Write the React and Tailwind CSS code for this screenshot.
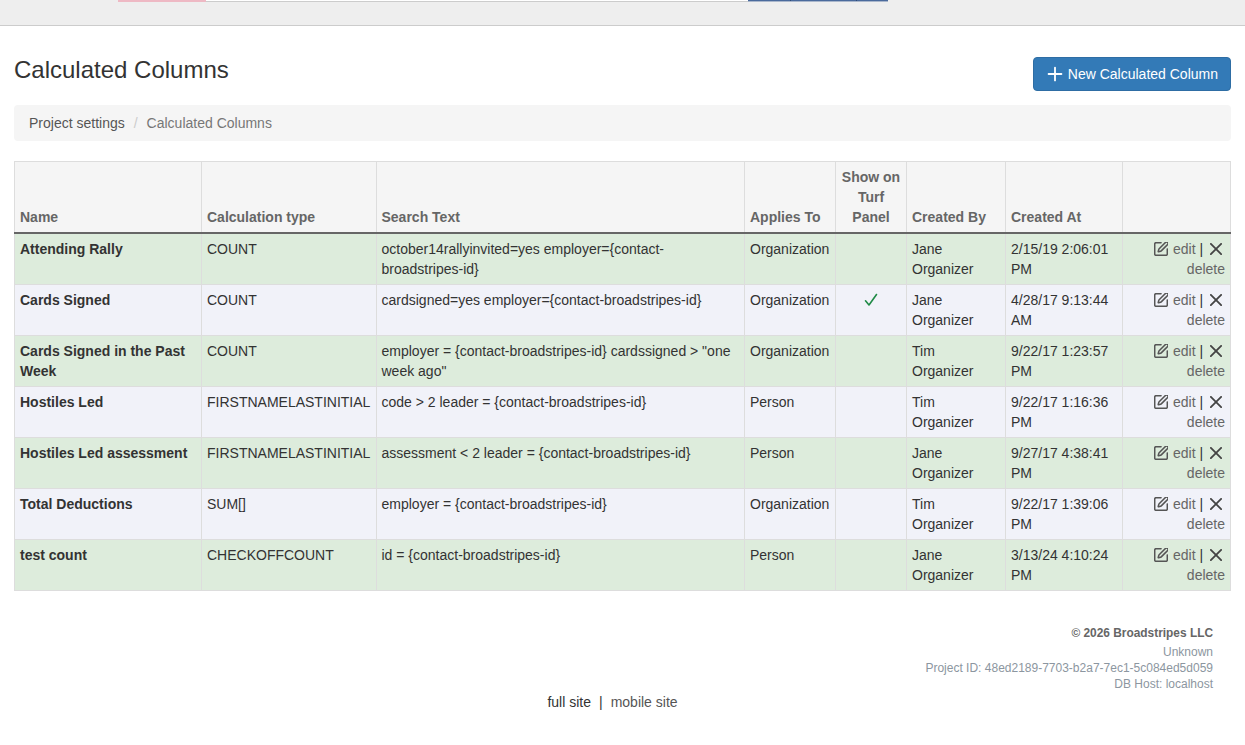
import React from "react";
import { Plus } from "lucide-react";

const rows = [
  ["Attending Rally", "COUNT", "october14rallyinvited=yes employer={contact-broadstripes-id}", "Organization", false, "Jane Organizer", "2/15/19 2:06:01 PM"],
  ["Cards Signed", "COUNT", "cardsigned=yes employer={contact-broadstripes-id}", "Organization", true, "Jane Organizer", "4/28/17 9:13:44 AM"],
  ["Cards Signed in the Past Week", "COUNT", 'employer = {contact-broadstripes-id} cardssigned > "one week ago"', "Organization", false, "Tim Organizer", "9/22/17 1:23:57 PM"],
  ["Hostiles Led", "FIRSTNAMELASTINITIAL", "code > 2 leader = {contact-broadstripes-id}", "Person", false, "Tim Organizer", "9/22/17 1:16:36 PM"],
  ["Hostiles Led assessment", "FIRSTNAMELASTINITIAL", "assessment < 2 leader = {contact-broadstripes-id}", "Person", false, "Jane Organizer", "9/27/17 4:38:41 PM"],
  ["Total Deductions", "SUM[]", "employer = {contact-broadstripes-id}", "Organization", false, "Tim Organizer", "9/22/17 1:39:06 PM"],
  ["test count", "CHECKOFFCOUNT", "id = {contact-broadstripes-id}", "Person", false, "Jane Organizer", "3/13/24 4:10:24 PM"],
];

const headers = ["Name", "Calculation type", "Search Text", "Applies To", "Show on Turf Panel", "Created By", "Created At", ""];
const widths = ["w-[187px]", "w-[175px]", "w-[368px]", "w-[91px]", "w-[71px]", "w-[99px]", "w-[117px]", "w-[108px]"];

function PenIcon() {
  return (
    <svg viewBox="2 2 20 20" width="14" height="14" className="inline-block mr-[5px] align-[-2px] text-[#555]" fill="none" stroke="currentColor" strokeWidth="2.2" strokeLinecap="round" strokeLinejoin="round">
      <path d="M12 3H5a2 2 0 0 0-2 2v14a2 2 0 0 0 2 2h14a2 2 0 0 0 2-2v-7" />
      <path d="M18.375 2.625a1 1 0 0 1 3 3l-9.013 9.014a2 2 0 0 1-.853.505l-2.873.84a.5.5 0 0 1-.62-.62l.84-2.873a2 2 0 0 1 .506-.852z" />
    </svg>
  );
}

function CrossIcon() {
  return (
    <svg viewBox="5 5 14 14" width="12" height="12" className="inline-block mx-[3px] align-[-1px] text-[#444]" fill="none" stroke="currentColor" strokeWidth="2.1" strokeLinecap="round">
      <path d="M18 6 6 18" />
      <path d="m6 6 12 12" />
    </svg>
  );
}

export default function App() {
  return (
    <div className="min-h-[745px] bg-white text-[14px] leading-[20px] text-[#333]" style={{ fontFamily: '"Liberation Sans", Arial, sans-serif' }}>
      <header className="h-[26px] border-b border-[#ccc] bg-[#eee] flex items-start pl-[118px]">
        <div className="h-[2px] w-[88px] bg-[#eeb9c4]" />
        <div className="h-[2px] w-[542px] bg-white border-b border-[#ccc]" />
        <div className="flex h-[2px] w-[140px] bg-[#4a6a9c] border-b border-[#a9b6cb]">
          <div className="w-[43px] border-r border-[#2f4a75]" />
          <div className="w-[66px] border-r border-[#2f4a75]" />
        </div>
      </header>

      <main className="px-[14px]">
        <div className="flex items-start justify-between pt-[31px]">
          <h1 className="text-[24px] leading-[26px] font-normal mt-0">Calculated Columns</h1>
          <button className="h-[34px] w-[198px] flex items-center justify-end gap-[2px] pr-[12px] rounded-[4px] border border-[#2e6da4] bg-[#337ab7] text-white text-[14px]">
            <Plus size={22} strokeWidth={2} />
            New Calculated Column
          </button>
        </div>

        <nav className="mt-[14px] h-[36px] flex items-center rounded-[4px] bg-[#f5f5f5] px-[15px]">
          <span className="text-[#555]">Project settings</span>
          <span className="text-[#ccc] px-[9px]">/</span>
          <span className="text-[#777]">Calculated Columns</span>
        </nav>

        <table className="mt-[20px] w-[1216px] table-fixed border-collapse border border-[#ddd]">
          <colgroup>
            {widths.map((w, i) => <col key={i} className={w} />)}
          </colgroup>
          <thead>
            <tr className="bg-[#f5f5f5]">
              {headers.map((h, i) => (
                <th key={i} className={`border border-[#ddd] border-b-2 border-b-[#666] px-[5px] pt-[5px] pb-[5px] align-bottom font-bold text-[#666] ${i === 4 ? "text-center" : "text-left"} ${i === 2 ? "!pl-[4.5px]" : ""}`}>{h}</th>
              ))}
            </tr>
          </thead>
          <tbody>
            {rows.map((r, i) => {
              const bg = i % 2 === 0 ? "bg-[#ddecdc]" : "bg-[#f1f2f9]";
              const cell = "border border-[#ddd] px-[5px] pt-[5px] pb-[5px] align-top";
              return (
                <tr key={i} className={`h-[51px] ${bg}`}>
                  <td className={`${cell} font-bold`}>{r[0]}</td>
                  <td className={cell}>{r[1]}</td>
                  <td className={`${cell} !pl-[4.5px]`}>{r[2]}</td>
                  <td className={cell}>{r[3]}</td>
                  <td className={`${cell} text-center`}>
                    {r[4] && (
                      <svg viewBox="0 0 14 14" width="14" height="14" className="inline-block align-[-2px]" fill="none" stroke="#1f8a46" strokeWidth="1.6" strokeLinecap="round" strokeLinejoin="round">
                        <path d="M1.5 7.8 L5 12 L12.5 1.5" />
                      </svg>
                    )}
                  </td>
                  <td className={cell}>{r[5]}</td>
                  <td className={cell}>{r[6]}</td>
                  <td className={`${cell} text-right text-[#666]`}>
                    <PenIcon />
                    edit <span className="text-[#333]">|</span>{" "}
                    <CrossIcon />{" "}
                    delete
                  </td>
                </tr>
              );
            })}
          </tbody>
        </table>
      </main>

      <footer className="mt-[34px] pr-[32px] text-right text-[12px] leading-[16px] text-[#8c96a0]">
        <div className="font-bold text-[11.9px] text-[#666] mb-[3px]">© 2026 Broadstripes LLC</div>
        <div>Unknown</div>
        <div>Project ID: 48ed2189-7703-b2a7-7ec1-5c084ed5d059</div>
        <div>DB Host: localhost</div>
      </footer>
      <div className="pr-[20px] flex justify-center gap-[8px] text-[#333]">
        <span>full site</span>
        <span>|</span>
        <span className="text-[#555]">mobile site</span>
      </div>
    </div>
  );
}
